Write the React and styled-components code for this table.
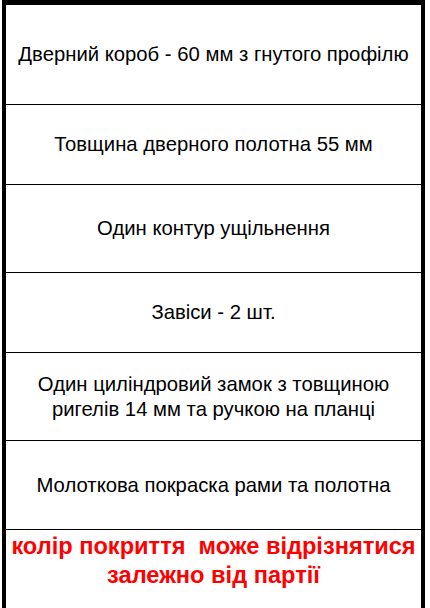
import styled, { createGlobalStyle } from "styled-components";

const GlobalStyle = createGlobalStyle`
  html, body {
    margin: 0;
    padding: 0;
    background: #fff;
  }
  body {
    font-family: "Liberation Sans", Arial, sans-serif;
    overflow: hidden;
  }
`;

const Table = styled.div`
  width: 423px;
  margin-left: 2px;
  border-top: 5px solid #000;
  border-left: 4px solid #000;
  border-right: 4px solid #000;
  box-sizing: border-box;
  display: flex;
  flex-direction: column;
`;

const Row = styled.div`
  height: ${(p) => p.$h}px;
  display: flex;
  align-items: ${(p) => (p.$top ? "flex-start" : "center")};
  justify-content: center;
  text-align: center;
  border-bottom: ${(p) => (p.$last ? "none" : "1px solid #000")};
  padding: ${(p) => (p.$top ? "2px 0 0" : "0")};
  box-sizing: border-box;
`;

const Cell = styled.p`
  margin: 0;
  font-size: 20.3px;
  line-height: 25px;
  color: #000;
  white-space: nowrap;
`;

const Note = styled.p`
  margin: 0;
  font-size: 23.6px;
  line-height: 29px;
  font-weight: 700;
  color: #ff0000;
  white-space: pre;
`;

const rows = [
  { h: 100, text: "Дверний короб - 60 мм з гнутого профілю" },
  { h: 80, text: "Товщина дверного полотна 55 мм" },
  { h: 88, text: "Один контур ущільнення" },
  { h: 80, text: "Завіси - 2 шт." },
  { h: 88, text: ["Один циліндровий замок з товщиною", "ригелів 14 мм та ручкою на планці"] },
  { h: 89, text: "Молоткова покраска рами та полотна" },
];

export default function App() {
  return (
    <>
      <GlobalStyle />
      <Table>
        {rows.map((r, i) => (
          <Row key={i} $h={r.h}>
            <Cell>
              {Array.isArray(r.text)
                ? r.text.map((l, j) => (
                    <span key={j}>
                      {l}
                      {j < r.text.length - 1 && <br />}
                    </span>
                  ))
                : r.text}
            </Cell>
          </Row>
        ))}
        <Row $h={90} $top $last>
          <Note>
            {"колір покриття  може відрізнятися"}
            <br />
            {"залежно від партії"}
          </Note>
        </Row>
      </Table>
    </>
  );
}
